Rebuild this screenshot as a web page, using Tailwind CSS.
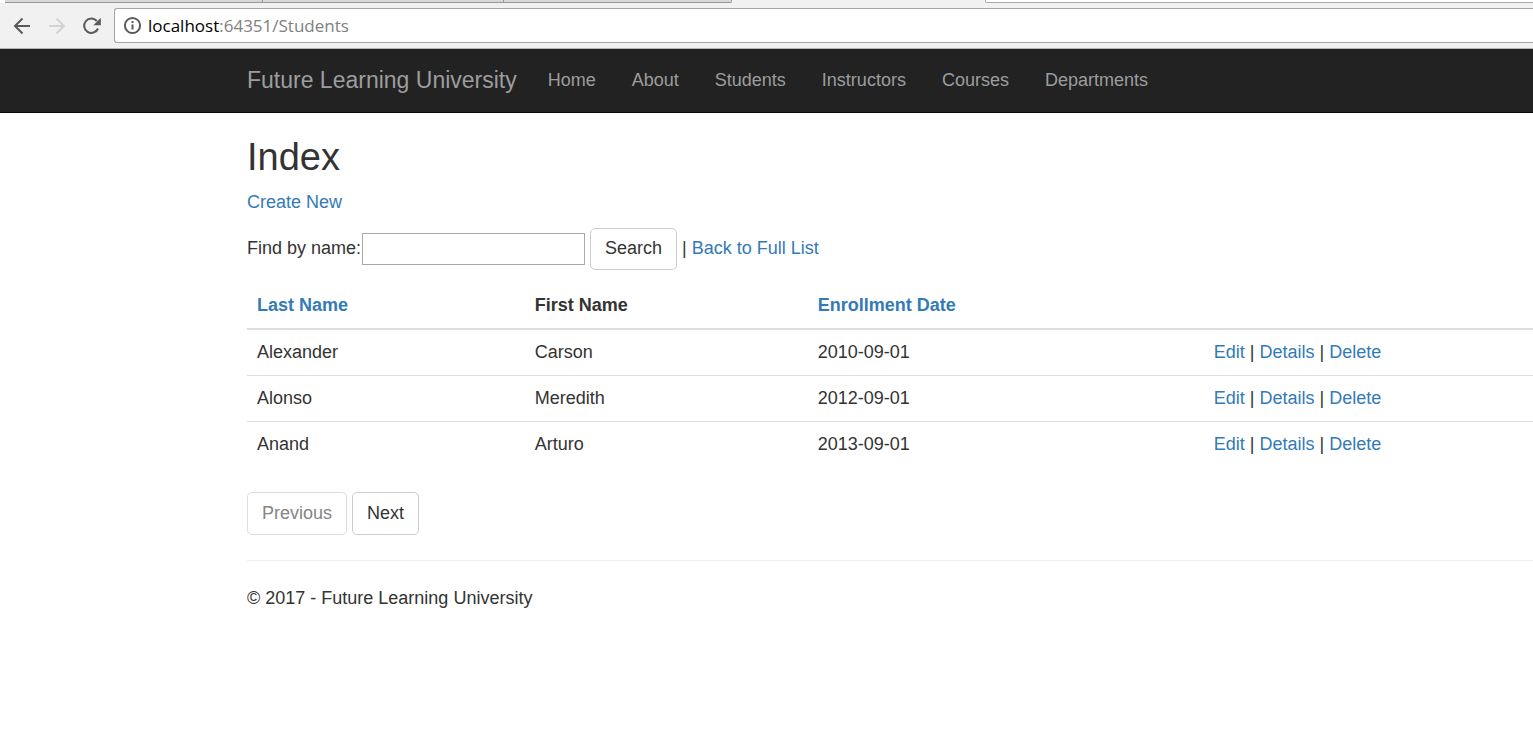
<!DOCTYPE html>
<html lang="en">
<head>
<meta charset="utf-8">
<title>Index - Future Learning University</title>
<script src="https://cdn.jsdelivr.net/npm/@tailwindcss/browser@4"></script>
</head>
<body class="min-h-screen overflow-x-hidden bg-white font-['Liberation_Sans',Arial,sans-serif] text-[18px] leading-[25px] text-[#333]">

<!-- Browser toolbar -->
<div class="bg-[#f1f1f1] border-b border-[#b4b4b4]">
  <div class="flex h-[3px]">
    <div class="w-[5px] bg-white"></div>
    <div class="w-[258px] bg-[#d8d8d8] border-b border-r border-[#999]"></div>
    <div class="w-[241px] bg-[#d8d8d8] border-b border-r border-[#999]"></div>
    <div class="w-[228px] bg-[#d8d8d8] border-b border-r border-[#999] rounded-br-xs"></div>
    <div class="w-[253px]"></div>
    <div class="flex-1 bg-white border-b border-l border-[#aaa] rounded-bl-xs"></div>
  </div>
  <div class="flex items-center pt-[5px] pb-[5px] pl-3">
    <button type="button" aria-label="Back" class="mr-[15px]">
      <svg class="block size-5" viewBox="0 0 20 20" fill="none" stroke="#5a5a5a" stroke-width="2"><path d="M18 10H3M10.500 2.500 3 10l7.500 7.500"/></svg>
    </button>
    <button type="button" aria-label="Forward" class="mr-[15px]">
      <svg class="block size-5" viewBox="0 0 20 20" fill="none" stroke="#d3d3d3" stroke-width="2"><path d="M2 10h15M9.500 2.500 17 10l-7.500 7.500"/></svg>
    </button>
    <button type="button" aria-label="Reload" class="mr-3">
      <svg class="block size-5" viewBox="0 0 20 20" fill="none" stroke="#5a5a5a" stroke-width="2"><path d="M16 12.500A7.200 7.200 0 1 1 14.800 5"/><path d="M18.800 1.800v7.400h-7.400z" fill="#5a5a5a" stroke="none"/></svg>
    </button>
    <div class="flex h-[35px] flex-1 items-center rounded-l-[3px] border border-r-0 border-[#a5a5a5] bg-white pl-2">
      <svg class="mr-[6px] size-[19px]" viewBox="0 0 19 19" fill="none" stroke="#5a5a5a" stroke-width="2"><circle cx="9.500" cy="9.500" r="7.600"/><path d="M9.500 8.500v5M9.500 5v2"/></svg>
      <span class="font-['Open_Sans','Noto_Sans',sans-serif] text-[17px] text-[#808080]"><span class="text-black">localhost</span>:64351/Students</span>
    </div>
  </div>
</div>

<!-- Site navigation -->
<header class="border-b border-[#080808] bg-[#222] text-[#9d9d9d]">
  <nav class="flex items-center py-[19px] pl-[247px]">
    <a href="#" class="mr-[31px] text-[23px]">Future Learning University</a>
    <div class="flex gap-9">
      <a href="#">Home</a>
      <a href="#">About</a>
      <a href="#">Students</a>
      <a href="#">Instructors</a>
      <a href="#">Courses</a>
      <a href="#">Departments</a>
    </div>
  </nav>
</header>

<main class="pt-6 pl-[247px]">
  <h2 class="text-[38px] leading-[41px]">Index</h2>
  <p class="mt-3"><a href="#" class="text-[#337ab7]">Create New</a></p>

  <form class="mt-[13px] flex items-center">
    <label for="search" class="mr-px pb-0.5">Find by name:</label>
    <input id="search" type="text" class="mr-[5px] h-8 w-[223px] border border-[#a9a9a9] px-1">
    <button type="button" class="mr-[5px] h-[42px] rounded-[5px] border border-[#ccc] px-[14px] pb-0.5">Search</button>
    <span class="pb-0.5">| <a href="#" class="text-[#337ab7]">Back to Full List</a></span>
  </form>

  <table class="mt-[13px] w-full table-fixed border-separate border-spacing-0 text-left [&_td]:p-[10px] [&_th]:p-[10px] [&_th]:border-b-2 [&_th]:border-[#ddd] [&_tr+tr_td]:border-t [&_tr+tr_td]:border-[#ddd] [&_a]:text-[#337ab7]">
    <thead>
      <tr>
        <th class="w-[21.6%]"><a href="#">Last Name</a></th>
        <th class="w-[22%]">First Name</th>
        <th class="w-[30.8%]"><a href="#">Enrollment Date</a></th>
        <th></th>
      </tr>
    </thead>
    <tbody>
      <tr><td>Alexander</td><td>Carson</td><td>2010-09-01</td><td><a href="#">Edit</a> | <a href="#">Details</a> | <a href="#">Delete</a></td></tr>
      <tr><td>Alonso</td><td>Meredith</td><td>2012-09-01</td><td><a href="#">Edit</a> | <a href="#">Details</a> | <a href="#">Delete</a></td></tr>
      <tr><td>Anand</td><td>Arturo</td><td>2013-09-01</td><td><a href="#">Edit</a> | <a href="#">Details</a> | <a href="#">Delete</a></td></tr>
    </tbody>
  </table>

  <div class="mt-[25px] flex gap-[5px]">
    <button type="button" disabled class="h-[43px] rounded-[5px] border border-[#ddd] px-[14px] text-[#858585]">Previous</button>
    <button type="button" class="h-[43px] rounded-[5px] border border-[#ccc] px-[14px]">Next</button>
  </div>

  <hr class="mt-[25px] border-[#eee]">
  <footer class="mt-[25px]"><p>© 2017 - Future Learning University</p></footer>
</main>
</body>
</html>
